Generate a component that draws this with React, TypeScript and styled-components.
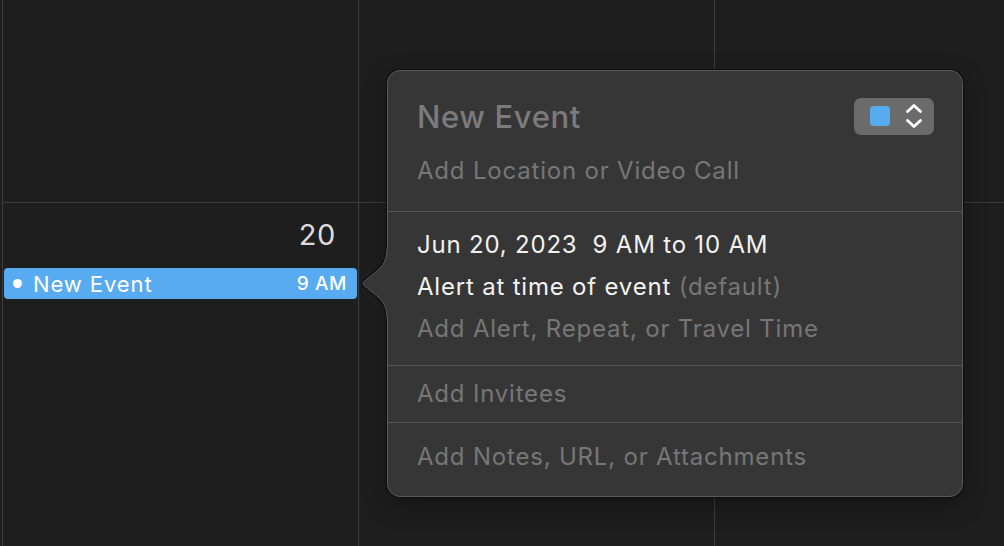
import React from 'react';
import styled, {createGlobalStyle} from 'styled-components';

const GlobalStyle = createGlobalStyle`
	html, body {
		margin: 0;
		padding: 0;
		background: #1e1e1e;
	}
	body {
		font-family: Inter, "Noto Sans", sans-serif;
		width: 1004px;
		height: 546px;
		overflow: hidden;
	}
`;

const Stage = styled.div`
	position: relative;
	width: 1004px;
	height: 546px;
	background: #1e1e1e;
`;

const Calendar = styled.div`
	display: grid;
	grid-template-columns: 355px 355px 1fr;
	grid-template-rows: 202px 1fr;
	gap: 1px;
	margin-left: 2px;
	padding-left: 1px;
	height: 100%;
	background: #3d3d3d;
`;

const Cell = styled.div`
	display: flex;
	flex-direction: column;
	background: #1e1e1e;
`;

const DayNumber = styled.div`
	margin-top: 16px;
	padding-right: 22px;
	text-align: right;
	font-size: 29px;
	letter-spacing: 0.6px;
	line-height: 32px;
	color: #dcdcdc;
`;

const EventBar = styled.div`
	display: flex;
	align-items: center;
	height: 31px;
	margin: 17px 1px 0;
	padding: 0 10px 0 9px;
	border-radius: 4px;
	background: #58aaf1;
	color: #fff;
`;

const Dot = styled.span`
	width: 9px;
	height: 9px;
	border-radius: 50%;
	background: #fff;
	margin-right: 11px;
`;

const EventTitle = styled.span`
	flex: 1;
	font-size: 22px;
	letter-spacing: 0.9px;
`;

const EventTime = styled.span`
	font-size: 19px;
	font-weight: 500;
	letter-spacing: 0.6px;
`;

const Popover = styled.div`
	position: absolute;
	left: 387px;
	top: 70px;
	width: 576px;
	height: 427px;
	box-sizing: border-box;
	border: 1px solid #5b5b5b;
	border-radius: 13px;
	background: #363636;
	box-shadow: 0 0 0 1px #0e0e0e, 0 8px 24px rgba(0, 0, 0, 0.35);
	display: flex;
	flex-direction: column;
`;

const Arrow = styled.svg`
	position: absolute;
	left: 360px;
	top: 248px;
	overflow: visible;
`;

const Section = styled.div<{$pt: number; $pb: number}>`
	padding: ${(p) => p.$pt}px 29px ${(p) => p.$pb}px 29px;
	border-bottom: 1px solid #555;
	&:last-child {
		border-bottom: none;
	}
`;

const HeaderRow = styled.div`
	display: flex;
	align-items: center;
	justify-content: space-between;
	height: 36px;
`;

const Title = styled.div`
	font-size: 31px;
	font-weight: 500;
	letter-spacing: 0.6px;
	color: #7b7b7b;
`;

const ColorButton = styled.div`
	display: flex;
	align-items: center;
	gap: 15px;
	width: 80px;
	height: 37px;
	box-sizing: border-box;
	padding-left: 16px;
	margin-right: -1px;
	border-radius: 7px;
	background: #6b6b6b;
`;

const Swatch = styled.span`
	width: 20px;
	height: 20px;
	border-radius: 4px;
	background: #58aaf1;
`;

const Line = styled.div<{$tone?: 'bright' | 'dim'}>`
	font-size: 24px;
	letter-spacing: 0.8px;
	line-height: 42px;
	color: ${(p) => (p.$tone === 'bright' ? '#f2f2f2' : '#777')};
`;

const Muted = styled.span`
	color: #777;
`;

function Chevrons() {
	return (
		<svg width="18" height="26" viewBox="0 0 18 26" fill="none">
			<path d="M2.5 8.5 L9 2.5 L15.5 8.5" stroke="#fff" strokeWidth="2.8" strokeLinecap="round" strokeLinejoin="round" />
			<path d="M2.5 17.5 L9 23.5 L15.5 17.5" stroke="#fff" strokeWidth="2.8" strokeLinecap="round" strokeLinejoin="round" />
		</svg>
	);
}

function PopoverArrow() {
	const edge =
		'M27,0 C27,12 23,18 17,23 L4,33.5 Q1.5,35.5 4,37.5 L17,48 C23,53 27,59 27,70';
	return (
		<Arrow width="30" height="70" viewBox="0 0 30 70">
			<path d={edge} fill="none" stroke="#0e0e0e" strokeWidth="3" />
			<path d={`${edge} L30,70 L30,0 Z`} fill="#363636" />
			<path d={edge} fill="none" stroke="#5b5b5b" strokeWidth="1" />
		</Arrow>
	);
}

function App() {
	return (
		<Stage>
			<GlobalStyle />
			<Calendar>
				<Cell />
				<Cell />
				<Cell />
				<Cell>
					<DayNumber>20</DayNumber>
					<EventBar>
						<Dot />
						<EventTitle>New Event</EventTitle>
						<EventTime>9 AM</EventTime>
					</EventBar>
				</Cell>
				<Cell />
				<Cell />
			</Calendar>

			<Popover>
				<Section $pt={27} $pb={19}>
					<HeaderRow>
						<Title>New Event</Title>
						<ColorButton>
							<Swatch />
							<Chevrons />
						</ColorButton>
					</HeaderRow>
					<Line style={{marginTop: 16}}>Add Location or Video Call</Line>
				</Section>
				<Section $pt={12} $pb={15}>
					<Line $tone="bright">Jun 20, 2023&nbsp;&nbsp;9 AM to 10 AM</Line>
					<Line $tone="bright">
						Alert at time of event <Muted>(default)</Muted>
					</Line>
					<Line>Add Alert, Repeat, or Travel Time</Line>
				</Section>
				<Section $pt={7} $pb={7}>
					<Line>Add Invitees</Line>
				</Section>
				<Section $pt={13} $pb={0}>
					<Line>Add Notes, URL, or Attachments</Line>
				</Section>
			</Popover>
			<PopoverArrow />
		</Stage>
	);
}

export default App;
